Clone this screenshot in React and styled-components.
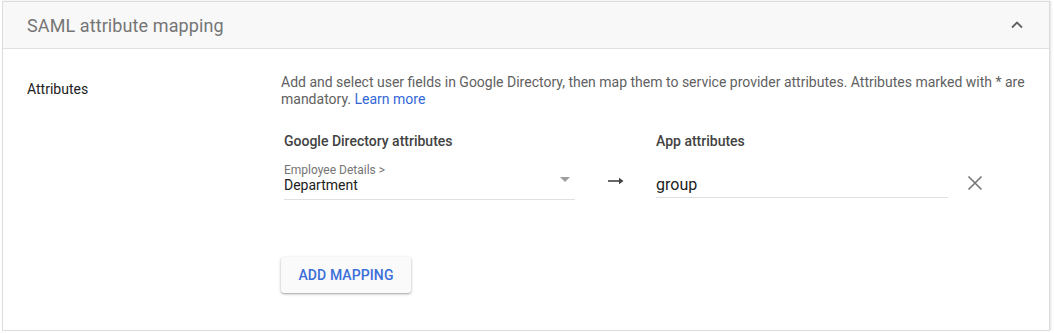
import React from "react";
import styled, { createGlobalStyle } from "styled-components";

const Global = createGlobalStyle`
  html, body { margin: 0; padding: 0; background: #fff; }
  body { font-family: Roboto, "Liberation Sans", Arial, sans-serif; }
  #root { padding: 1px 4px 0 2px; }
`;

const Card = styled.section`
  border: 1px solid #dcdcdc;
  background: #fff;
  height: 330px;
  box-sizing: border-box;
  box-shadow: 1px 0 2px rgba(0,0,0,0.12);
`;

const Header = styled.div`
  height: 46px;
  background: #f8f8f8;
  border-bottom: 1px solid #e0e0e0;
  display: flex;
  align-items: center;
  justify-content: space-between;
  padding: 0 20px 0 24px;
`;

const Title = styled.h2`
  margin: 0;
  font-size: 18px;
  font-weight: 400;
  color: #757575;
  letter-spacing: 0.1px;
`;

const IconButton = styled.button`
  border: 0;
  background: transparent;
  padding: 0;
  display: flex;
  align-items: center;
  justify-content: center;
  width: 24px;
  height: 24px;
  cursor: pointer;
`;

const Body = styled.div`
  display: flex;
  padding: 25px 20px 0 24px;
`;

const Label = styled.div`
  width: 254px;
  flex: none;
  font-size: 14px;
  color: #212121;
  padding-top: 7px;
`;

const Content = styled.div`
  flex: 1;
`;

const Description = styled.p`
  margin: 0;
  font-size: 14px;
  line-height: 17px;
  color: #616161;
  padding-right: 2px;
`;

const Link = styled.a`
  color: #3367d6;
  text-decoration: none;
`;

const Grid = styled.div`
  display: grid;
  grid-template-columns: 291px 81px 292px 48px;
  margin-left: 3px;
  margin-top: 25px;
`;

const ColHead = styled.div`
  font-size: 14px;
  font-weight: 500;
  color: #424242;
  height: 17px;
  line-height: 17px;
`;

const Select = styled.div`
  margin-top: 10px;
  height: 39px;
  border-bottom: 1px solid #e0e0e0;
  position: relative;
  display: flex;
  flex-direction: column;
  justify-content: flex-start;
`;

const Crumb = styled.div`
  font-size: 12px;
  line-height: 14px;
  color: #757575;
  margin-top: 3px;
`;

const Value = styled.div`
  font-size: 14px;
  line-height: 17px;
  color: #212121;
`;

const Caret = styled.span`
  position: absolute;
  right: 5px;
  top: 17px;
  width: 0;
  height: 0;
  border-left: 5px solid transparent;
  border-right: 5px solid transparent;
  border-top: 5px solid #9e9e9e;
`;

const ArrowCell = styled.div`
  display: flex;
  align-items: flex-start;
  padding-top: 27px;
  padding-left: 33px;
`;

const InputWrap = styled.div`
  margin-top: 10px;
  height: 37px;
  border-bottom: 1px solid #e0e0e0;
  display: flex;
  align-items: flex-end;
`;

const Input = styled.input`
  border: 0;
  outline: none;
  background: transparent;
  font-family: inherit;
  font-size: 16px;
  color: #212121;
  padding: 0 0 3px 0;
  width: 100%;
`;

const RemoveCell = styled.div`
  display: flex;
  padding-top: 25px;
  padding-left: 19px;
`;

const Button = styled.button`
  margin-top: 57px;
  height: 36px;
  width: 130px;
  border: 0;
  border-radius: 3px;
  background: #fafafa;
  box-shadow: 0 1px 3px rgba(0,0,0,0.3), 0 1px 1px rgba(0,0,0,0.1);
  color: #3b6fd9;
  font-family: inherit;
  font-size: 14px;
  font-weight: 500;
  text-transform: uppercase;
  letter-spacing: 0.1px;
  cursor: pointer;
`;

export default function App() {
  return (
    <>
      <Global />
      <Card>
        <Header>
          <Title>SAML attribute mapping</Title>
          <IconButton aria-label="Collapse">
            <svg width="14" height="10" viewBox="0 0 14 10">
              <path d="M2 7.5 L7 2.5 L12 7.5" fill="none" stroke="#616161" strokeWidth="1.8" />
            </svg>
          </IconButton>
        </Header>
        <Body>
          <Label>Attributes</Label>
          <Content>
            <Description>
              Add and select user fields in Google Directory, then map them to service provider attributes. Attributes marked with * are mandatory. <Link href="#">Learn more</Link>
            </Description>
            <Grid>
              <ColHead>Google Directory attributes</ColHead>
              <div />
              <ColHead>App attributes</ColHead>
              <div />
              <Select>
                <Crumb>Employee Details &gt;</Crumb>
                <Value>Department</Value>
                <Caret />
              </Select>
              <ArrowCell>
                <svg width="16" height="8" viewBox="0 0 16 8">
                  <path d="M0 4 H12" stroke="#424242" strokeWidth="1.6" />
                  <path d="M11 0.8 L15.5 4 L11 7.2 Z" fill="#424242" />
                </svg>
              </ArrowCell>
              <InputWrap>
                <Input defaultValue="group" />
              </InputWrap>
              <RemoveCell>
                <svg width="16" height="16" viewBox="0 0 16 16">
                  <path d="M1.5 1.5 L14.5 14.5 M14.5 1.5 L1.5 14.5" stroke="#757575" strokeWidth="1.6" />
                </svg>
              </RemoveCell>
            </Grid>
            <Button>Add mapping</Button>
          </Content>
        </Body>
      </Card>
    </>
  );
}
